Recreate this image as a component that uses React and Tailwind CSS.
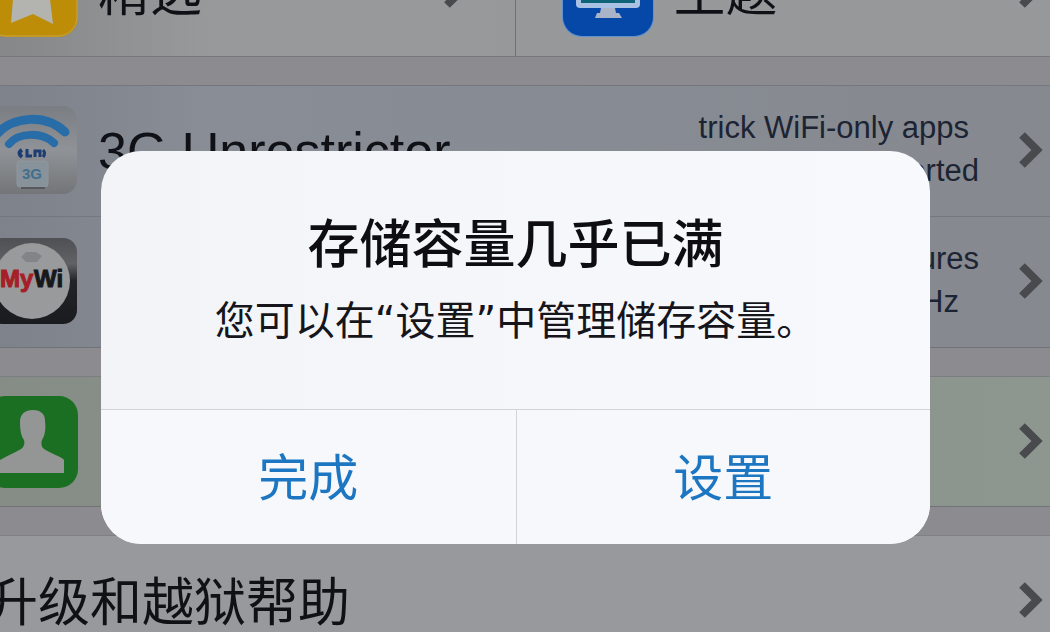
const fontStack = "font-['Liberation_Sans','Noto_Sans_CJK_SC',sans-serif]";

function Chevron() {
	return (
		<svg className="shrink-0" width="24" height="38" viewBox="0 0 24 38" aria-hidden="true">
			<path
				d="M3 3 L18 18 L3 33"
				fill="none"
				stroke="#484a4d"
				strokeWidth="8"
				strokeLinejoin="miter"
			/>
		</svg>
	);
}

function StarIcon() {
	return (
		<svg className="shrink-0" width="92" height="92" viewBox="0 0 92 92" aria-hidden="true">
			<rect width="92" height="92" rx="20" fill="#bd8d08" />
			<rect x="1" y="1" width="90" height="90" rx="19" fill="none" stroke="#c9a640" strokeWidth="1" />
			<path d="M46 12 L55 37 L80 38 L64 54 L67 79 L47 69 L25 78 L27 54 L12 38 L37 37 Z" fill="#b3b3b0" />
		</svg>
	);
}

function MonitorIcon() {
	return (
		<svg className="shrink-0" width="92" height="92" viewBox="0 0 92 92" aria-hidden="true">
			<rect width="92" height="92" rx="20" fill="#5f92cf" />
			<rect x="1" y="1" width="90" height="90" rx="19" fill="#0648a8" />
			<rect x="14" y="16" width="64" height="47" rx="4" fill="#a9c2e4" />
			<rect x="19" y="20" width="54" height="38" fill="#10647a" />
			<path d="M39 63 H53 L54 68 H57 L60 73 H33 L35 68 H38 Z" fill="#a9b4c8" />
		</svg>
	);
}

function WifiIcon() {
	return (
		<svg className="shrink-0" width="92" height="92" viewBox="0 0 92 92" aria-hidden="true">
			<defs>
				<linearGradient id="wifiBg" x1="0" y1="0" x2="0" y2="1">
					<stop offset="0" stopColor="#7a7e82" />
					<stop offset="0.5" stopColor="#8f9397" />
					<stop offset="1" stopColor="#737578" />
				</linearGradient>
			</defs>
			<rect x="1" y="1" width="90" height="88" rx="14" fill="url(#wifiBg)" />
			<g fill="none" stroke="#286ca8" strokeLinecap="round">
				<path d="M9 31 C27 10 60 9 79 27" strokeWidth="9" />
				<path d="M23 39 C33 27 56 27 68 38" strokeWidth="8" />
			</g>
			<g fill="none" stroke="#1c3c72" strokeWidth="3">
				<path d="M36 45 Q31 48 36 52" strokeWidth="4" />
				<path d="M41 44 V51 H46" />
				<path d="M49 52 V46 H54 V52" />
				<path d="M57 45 Q60 48 57 52" />
			</g>
			<rect x="31" y="56" width="31" height="26" rx="3" fill="#87929a" stroke="#8f979c" />
			<path d="M35 83 H59" stroke="#55595d" strokeWidth="2" />
			<text x="46" y="74" textAnchor="middle" fontSize="15" fontWeight="700" fill="#416f8c">
				3G
			</text>
		</svg>
	);
}

function MyWiIcon() {
	return (
		<svg className="shrink-0" width="92" height="92" viewBox="0 0 92 92" aria-hidden="true">
			<defs>
				<linearGradient id="myWiBg" x1="0" y1="0" x2="0" y2="1">
					<stop offset="0" stopColor="#4e5053" />
					<stop offset="0.3" stopColor="#606265" />
					<stop offset="0.5" stopColor="#222327" />
					<stop offset="1" stopColor="#1a1b1f" />
				</linearGradient>
			</defs>
			<rect x="2" y="2" width="89" height="86" rx="14" fill="url(#myWiBg)" />
			<circle cx="46" cy="45" r="38" fill="#999a9c" />
			<path d="M35 21 L40 16 H50 L56 20 L51 26 H40 Z" fill="#838487" />
			<text x="14" y="51" fontSize="24" fontWeight="700" fill="#a51e28" stroke="#a51e28">
				My
			</text>
			<text x="48" y="51" fontSize="24" fontWeight="700" fill="#17181b" stroke="#17181b">
				Wi
			</text>
		</svg>
	);
}

function PersonIcon() {
	return (
		<svg className="shrink-0" width="92" height="92" viewBox="0 0 92 92" aria-hidden="true">
			<rect width="92" height="92" rx="19" fill="#1b6f22" />
			<path
				d="M47 14 C39 14 34 18 34 26 C34 33 35 40 38 44 C39 48 38 51 35 53 C29 57 20 60 14 64 C12 66 12 70 12 77 H78 V64 C76 61 64 57 58 53 C55 51 55 47 56 44 C59 39 60 33 59 25 C59 18 55 14 47 14 Z"
				fill="#939695"
			/>
		</svg>
	);
}

const apps = [
	{
		id: "3G Unrestrictor",
		name: "3G Unrestrictor",
		icon: <WifiIcon />,
		notes: [
			{ text: "trick WiFi-only apps", className: "pr-[10px]" },
			{ text: "supported", className: "" },
		],
	},
	{
		id: "MyWi",
		name: "",
		icon: <MyWiIcon />,
		notes: [
			{ text: "features", className: "" },
			{ text: "GHz", className: "pr-[20px]" },
		],
	},
];

function CategoryLink({ name, icon, className }) {
	return (
		<a href="#" className={"flex h-[131px] items-center gap-5 " + className}>
			{icon}
			<span className="flex-1 pt-1 text-[52px] leading-[56px]">{name}</span>
			<Chevron />
		</a>
	);
}

function AppRow({ app }) {
	return (
		<a
			href="#"
			aria-label={app.id}
			className="flex h-[131px] items-center gap-5 border-t border-[#74777d] bg-linear-to-r from-[#7e828a] via-[#888d96] via-20% to-[#86898f] pr-[7px]"
		>
			<span className="-ml-[14px] shrink-0">{app.icon}</span>
			<span className="flex-1 whitespace-nowrap text-[52px] leading-[56px]">{app.name}</span>
			<span className="flex flex-col items-end pr-5 pb-1 text-[31px] leading-[43px] text-[#1c2333]">
				{app.notes.map((note) => (
					<span key={note.text} className={note.className}>
						{note.text}
					</span>
				))}
			</span>
			<Chevron />
		</a>
	);
}

function StorageAlert() {
	return (
		<div
			role="alertdialog"
			aria-labelledby="alert-title"
			aria-describedby="alert-text"
			className="w-full overflow-hidden rounded-[40px] bg-linear-to-r from-[#f3f4f7] to-[#f7f9fc]"
		>
			<div className="flex h-[258px] flex-col items-center pt-16 text-center">
				<h2 id="alert-title" className="text-[52px] font-medium leading-[60px] text-[#0d0d12]">
					存储容量几乎已满
				</h2>
				<p
					id="alert-text"
					className="mt-4 whitespace-nowrap font-['DejaVu_Sans','Noto_Sans_CJK_SC',sans-serif] text-[40px] leading-[60px] text-[#15151b]"
				>
					您可以在“设置”中管理储存容量。
				</p>
			</div>
			<div className="grid h-[135px] grid-cols-2 border-t border-[#d3d4d9] bg-[#f7f8fb] text-[50px] text-[#1d76c2]">
				<button type="button" className="pt-1">
					完成
				</button>
				<button type="button" className="border-l border-[#d3d4d9] pt-1">
					设置
				</button>
			</div>
		</div>
	);
}

export default function App() {
	return (
		<div className={"relative h-screen overflow-hidden bg-[#8b8b90] text-[#101116] " + fontStack}>
			<main>
				<nav className="grid h-14 grid-cols-[49fr_51fr] content-end items-end overflow-hidden bg-linear-to-r from-[#858789] via-[#98999b] via-20% to-[#97989a]">
					<CategoryLink
						name="精选"
						icon={
							<span className="-ml-[14px]">
								<StarIcon />
							</span>
						}
						className="pr-[47px]"
					/>
					<CategoryLink
						name="主题"
						icon={<MonitorIcon />}
						className="border-l border-[#707174] pl-[46px] pr-[7px]"
					/>
				</nav>
				<div className="h-[29px] border-t border-[#76777a]" />
				{apps.map((app) => (
					<AppRow key={app.id} app={app} />
				))}
				<div className="h-[29px] border-t border-[#707277]" />
				<a
					href="#"
					aria-label="contact"
					className="flex h-[130px] items-center justify-between border-t border-[#7b7d80] bg-linear-to-r from-[#858d86] to-[#8d978f] pr-[7px]"
				>
					<span className="-ml-[14px]">
						<PersonIcon />
					</span>
					<Chevron />
				</a>
				<div className="h-[29px] border-t border-[#707277]" />
				<a
					href="#"
					className="flex h-[131px] items-center justify-between border-t border-[#7f8083] bg-[#98999c] pr-[7px]"
				>
					<span className="-ml-[14px] pt-1 text-[52px] leading-[56px]">升级和越狱帮助</span>
					<Chevron />
				</a>
			</main>
			<div className="absolute inset-0 pt-[151px] pr-[120px] pl-[101px]">
				<StorageAlert />
			</div>
		</div>
	);
}
